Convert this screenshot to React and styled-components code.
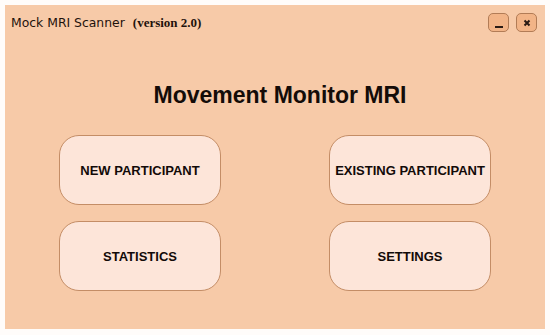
import React from "react";
import styled, { createGlobalStyle } from "styled-components";

const Global = createGlobalStyle`
  html, body { margin: 0; padding: 0; background: #fffcfa; }
  body { font-family: "DejaVu Sans", sans-serif; }
`;

const Window = styled.div`
  box-sizing: border-box;
  margin: 5px;
  width: 540px;
  height: 324px;
  background: #f7caa8;
  display: flex;
  flex-direction: column;
`;

const TitleBar = styled.div`
  display: flex;
  align-items: center;
  justify-content: space-between;
  padding: 8px 8px 0 6px;
`;

const Title = styled.div`
  display: flex;
  align-items: baseline;
  gap: 8px;
  color: #1e120c;
  font-family: "DejaVu Sans", sans-serif;
  font-size: 12.4px;
  margin-top: 1px;
`;

const Version = styled.span`
  font-family: "Liberation Serif", serif;
  font-weight: bold;
  font-size: 13px;
`;

const Controls = styled.div`
  display: flex;
  gap: 7px;
`;

const Ctrl = styled.button`
  box-sizing: border-box;
  width: 21px;
  height: 19px;
  padding: 0 0 ${(p) => (p.$min ? "2px" : "0")};
  border: 1px solid #b27c56;
  border-radius: 5px;
  background: #f2b487;
  display: flex;
  align-items: ${(p) => (p.$min ? "flex-end" : "center")};
  justify-content: center;
  cursor: pointer;
`;

const Heading = styled.h1`
  margin: 49px 0 0;
  padding-left: 10px;
  text-align: center;
  font-family: "Liberation Sans", sans-serif;
  font-weight: bold;
  font-size: 23px;
  line-height: 28px;
  color: #140c08;
`;

const Grid = styled.div`
  display: grid;
  grid-template-columns: 162px 162px;
  grid-auto-rows: 70px;
  column-gap: 108px;
  row-gap: 16px;
  padding-left: 54px;
  margin-top: 26px;
`;

const MenuButton = styled.button`
  box-sizing: border-box;
  border: 1px solid #c48d66;
  border-radius: 20px;
  background: #fde5d9;
  font-family: "Liberation Sans", sans-serif;
  font-weight: bold;
  font-size: 13px;
  color: #120a08;
  padding: 0;
  cursor: pointer;
`;

export default function App() {
  return (
    <>
      <Global />
      <Window>
        <TitleBar>
          <Title>
            <span>Mock MRI Scanner</span>
            <Version>(version 2.0)</Version>
          </Title>
          <Controls>
            <Ctrl $min aria-label="minimize">
              <svg width="10" height="3" viewBox="0 0 10 3">
                <rect x="1" y="0" width="8" height="2" fill="#2a1a14" />
              </svg>
            </Ctrl>
            <Ctrl aria-label="close">
              <svg width="8" height="8" viewBox="0 0 8 8">
                <path d="M1.5 1.5 L6.5 6.5 M6.5 1.5 L1.5 6.5" stroke="#2a1a14" strokeWidth="2" />
              </svg>
            </Ctrl>
          </Controls>
        </TitleBar>
        <Heading>Movement Monitor MRI</Heading>
        <Grid>
          <MenuButton>NEW PARTICIPANT</MenuButton>
          <MenuButton>EXISTING PARTICIPANT</MenuButton>
          <MenuButton>STATISTICS</MenuButton>
          <MenuButton>SETTINGS</MenuButton>
        </Grid>
      </Window>
    </>
  );
}
